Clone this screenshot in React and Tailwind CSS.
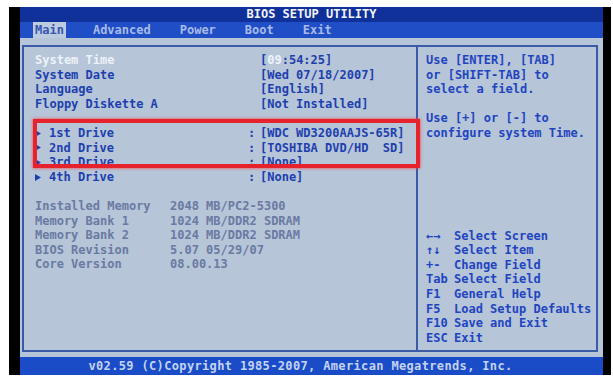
export default function App() {
  const mono = "font-['DejaVu_Sans_Mono','Liberation_Mono',monospace] font-bold text-[12px]";
  const row = 'flex h-[14.6px]';

  const drives = [
    ['1st Drive', '[WDC WD3200AAJS-65R]'],
    ['2nd Drive', '[TOSHIBA DVD/HD  SD]'],
    ['3rd Drive', '[None]'],
    ['4th Drive', '[None]'],
  ];

  const memory = [
    ['Installed Memory', '2048 MB/PC2-5300'],
    ['Memory Bank 1', '1024 MB/DDR2 SDRAM'],
    ['Memory Bank 2', '1024 MB/DDR2 SDRAM'],
    ['BIOS Revision', '5.07 05/29/07'],
    ['Core Version', '08.00.13'],
  ];

  const keys = [
    ['←→', 'Select Screen'],
    ['↑↓', 'Select Item'],
    ['+-', 'Change Field'],
    ['Tab', 'Select Field'],
    ['F1', 'General Help'],
    ['F5', 'Load Setup Defaults'],
    ['F10', 'Save and Exit'],
    ['ESC', 'Exit'],
  ];

  return (
    <div className={`w-[613px] h-[383px] bg-white pt-[7px] pl-[9px] overflow-hidden ${mono} leading-[14.6px]`}>
      <div className="w-[602px] h-[368px] bg-black pl-[11px] pr-[8px] flex">
        <div className="relative flex-1 flex flex-col">
          {/* title */}
          <div className="h-[15px] bg-[#10309a] text-[#f2f4fa] text-center leading-[15px]">
            BIOS SETUP UTILITY
          </div>

          {/* menu */}
          <div className="h-[16px] bg-[#1f4ec6] flex items-center gap-[25px] pl-[13px] leading-[16px]">
            <span className="px-[2px] bg-[#bccbdf] text-[#3656b0]">Main</span>
            <span className="px-[2px] text-[#a9bbe6]">Advanced</span>
            <span className="px-[2px] text-[#a9bbe6]">Power</span>
            <span className="px-[2px] text-[#a9bbe6]">Boot</span>
            <span className="px-[2px] text-[#a9bbe6]">Exit</span>
          </div>

          {/* body */}
          <div className="flex-1 bg-[#b6c5d8] pt-[7px] pl-[2px] pr-[5px] pb-[5px] flex">
            <div className="flex-1 flex border-2 border-[#3b5aa8]">
              {/* left panel */}
              <div className="w-[392px] pl-[11px] pt-[6px] text-[#1d3fae]">
                <div className={row}>
                  <span className="w-[225px] text-[#eef2fa]">System Time</span>
                  <span>[<span className="text-[#eef2fa]">09</span>:54:25]</span>
                </div>
                <div className={row}>
                  <span className="w-[225px]">System Date</span>
                  <span>[Wed 07/18/2007]</span>
                </div>
                <div className={row}>
                  <span className="w-[225px]">Language</span>
                  <span>[English]</span>
                </div>
                <div className={row}>
                  <span className="w-[225px]">Floppy Diskette A</span>
                  <span>[Not Installed]</span>
                </div>

                <div className="mt-[14.6px]">
                  {drives.map(([label, value]) => (
                    <div key={label} className={row}>
                      <span className="w-[213px] flex items-center">
                        <svg width="6" height="7" viewBox="0 0 6 7" className="mr-[8px]">
                          <path d="M0 0 L6 3.5 L0 7 Z" fill="#1d3fae" />
                        </svg>
                        {label}
                      </span>
                      <span className="w-[12px]">:</span>
                      <span className="whitespace-pre">{value}</span>
                    </div>
                  ))}
                </div>

                <div className="mt-[14.6px] text-[#6a7aa2]">
                  {memory.map(([label, value]) => (
                    <div key={label} className={row}>
                      <span className="w-[135px]">{label}</span>
                      <span>{value}</span>
                    </div>
                  ))}
                </div>
              </div>

              {/* right panel */}
              <div className="flex-1 border-l-2 border-[#3b5aa8] pl-[8px] pt-[6px] text-[#1f44c0]">
                <div className={row}>Use [ENTER], [TAB]</div>
                <div className={row}>or [SHIFT-TAB] to</div>
                <div className={row}>select a field.</div>
                <div className={`${row} mt-[14.6px]`}>Use [+] or [-] to</div>
                <div className={row}>configure system Time.</div>

                <div className="mt-[88px]">
                  {keys.map(([k, d]) => (
                    <div key={k} className={row}>
                      <span className="w-[28px]">{k}</span>
                      <span>{d}</span>
                    </div>
                  ))}
                </div>
              </div>
            </div>
          </div>

          {/* footer */}
          <div className="h-[18px] bg-[#1a4cc8] text-[#c4d3f2] text-center leading-[18px] pr-[22px] tracking-[0.35px]">
            v02.59 (C)Copyright 1985-2007, American Megatrends, Inc.
          </div>

          {/* red highlight annotation */}
          <div className="absolute left-[13px] top-[112px] w-[387px] h-[49px] border-4 border-[#e6222c] shadow-[0_0_3px_#ff3b3b]" />
        </div>
      </div>
    </div>
  );
}
